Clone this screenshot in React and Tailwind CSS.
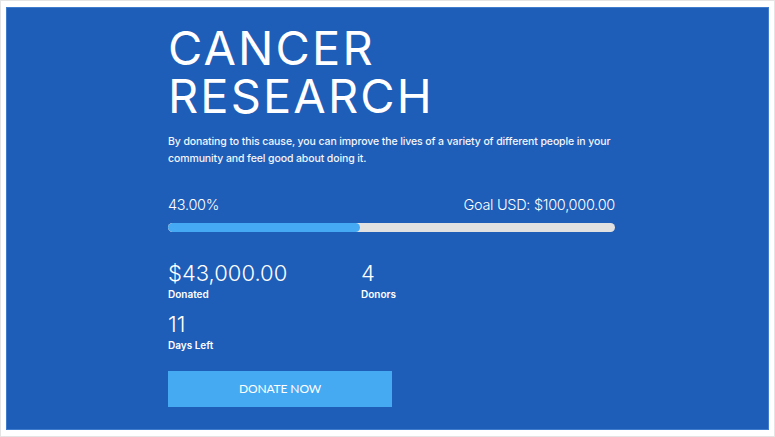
export default function App() {
  const raised = 43000
  const goal = 100000
  const pct = (raised / goal) * 100

  return (
    <div className="w-[775px] h-[437px] border border-[#e4e4e4] bg-white p-[5px] pt-[6px]" style={{ fontFamily: 'Inter, "Noto Sans", sans-serif' }}>
      <div className="h-[423px] bg-[#1e5db8] border border-[#3f7ccd] pl-[161px] pt-[16px]">
        <div className="w-[447px] text-white">
          <h1 className="text-[47px] leading-[48px] tracking-[0.045em] font-normal">
            <span className="block">CANCER</span>
            <span className="block">RESEARCH</span>
          </h1>
          <p className="mt-[13px] text-[10.5px] leading-[17px] font-medium tracking-[-0.01em] text-[#f3f6fb]">
            By donating to this cause, you can improve the lives of a variety of different people in your community and feel good about doing it.
          </p>

          <div className="mt-[27px] flex items-center justify-between text-[14.5px] font-light tracking-[-0.02em]">
            <span>{pct.toFixed(2)}%</span>
            <span>Goal USD: $100,000.00</span>
          </div>
          <div className="mt-[7px] h-[9px] rounded-full bg-[#e1e1e1] overflow-hidden">
            <div className="h-full rounded-full bg-[#45a9f3]" style={{ width: `${pct}%` }} />
          </div>

          <div className="mt-[28px] grid grid-cols-[193px_1fr] gap-y-[11px]">
            <div>
              <div className="text-[22px] leading-[26px] font-light">$43,000.00</div>
              <div className="text-[10px] leading-[12px] font-semibold mt-[2px]">Donated</div>
            </div>
            <div>
              <div className="text-[22px] leading-[26px] font-light">4</div>
              <div className="text-[10px] leading-[12px] font-semibold mt-[2px]">Donors</div>
            </div>
            <div>
              <div className="text-[22px] leading-[26px] font-light">11</div>
              <div className="text-[10px] leading-[12px] font-semibold mt-[2px]">Days Left</div>
            </div>
          </div>

          <button
            className="mt-[20px] w-[224px] h-[36px] bg-[#46aaf3] text-white text-[12px] tracking-[-0.01em]"
            style={{ fontFamily: 'Lato, "Open Sans", sans-serif' }}
          >
            DONATE NOW
          </button>
        </div>
      </div>
    </div>
  )
}
